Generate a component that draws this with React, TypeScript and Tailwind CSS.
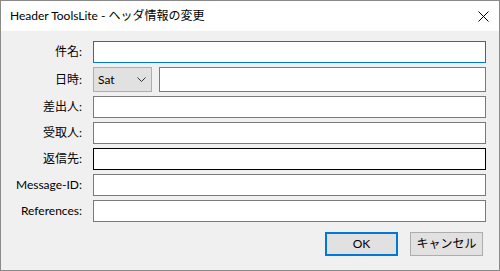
import { Fragment } from "react";

export default function App() {
  const rows = ["差出人:", "受取人:", "返信先:", "Message-ID:", "References:"];
  return (
    <div
      className="w-[500px] h-[271px] border border-[#8a8a8a] bg-[#f0f0f0] flex flex-col text-[12px] text-black"
      style={{ fontFamily: 'Lato, "Noto Sans CJK JP", sans-serif' }}
    >
      <div className="h-[30px] bg-white flex items-center justify-between pl-[9px] pr-[9px] shrink-0">
        <span className="leading-none">Header ToolsLite - ヘッダ情報の変更</span>
        <svg width="11" height="11" viewBox="0 0 11 11" className="mr-[1px]">
          <path d="M0.5 0.5L10.5 10.5M10.5 0.5L0.5 10.5" stroke="#000" strokeWidth="1" />
        </svg>
      </div>

      <div className="flex flex-col pt-[10px] pr-[13px]">
        <div className="grid grid-cols-[81px_1fr] gap-x-[11px] gap-y-[4px]">
          <label className="h-[22px] flex items-center justify-end">件名:</label>
          <div className="h-[22px] border border-[#0078d7] bg-white" />

          <label className="h-[25px] flex items-center justify-end">日時:</label>
          <div className="flex gap-[7px] h-[25px]">
            <div className="w-[59px] border border-[#adadad] bg-[#e1e1e1] flex items-center justify-between pl-[4px] pr-[5px]">
              <span>Sat</span>
              <svg width="9" height="5" viewBox="0 0 9 5">
                <path d="M0.5 0.5L4.5 4.5L8.5 0.5" fill="none" stroke="#333" strokeWidth="1" />
              </svg>
            </div>
            <div className="flex-1 border border-[#7a7a7a] bg-white" />
          </div>

          {rows.map((r) => (
            <Fragment key={r}>
              <label className="h-[22px] flex items-center justify-end">{r}</label>
              <div
                className={
                  r === "返信先:"
                    ? "h-[22px] border border-black bg-white"
                    : "h-[22px] border border-[#7a7a7a] bg-white"
                }
              />
            </Fragment>
          ))}
        </div>

        <div className="flex justify-end gap-[12px] mt-[10px] pr-[3px]">
          <button className="w-[73px] h-[24px] border-2 border-[#0078d7] bg-[#e1e1e1]">OK</button>
          <button className="w-[73px] h-[24px] border border-[#adadad] bg-[#e1e1e1]">キャンセル</button>
        </div>
      </div>
    </div>
  );
}
